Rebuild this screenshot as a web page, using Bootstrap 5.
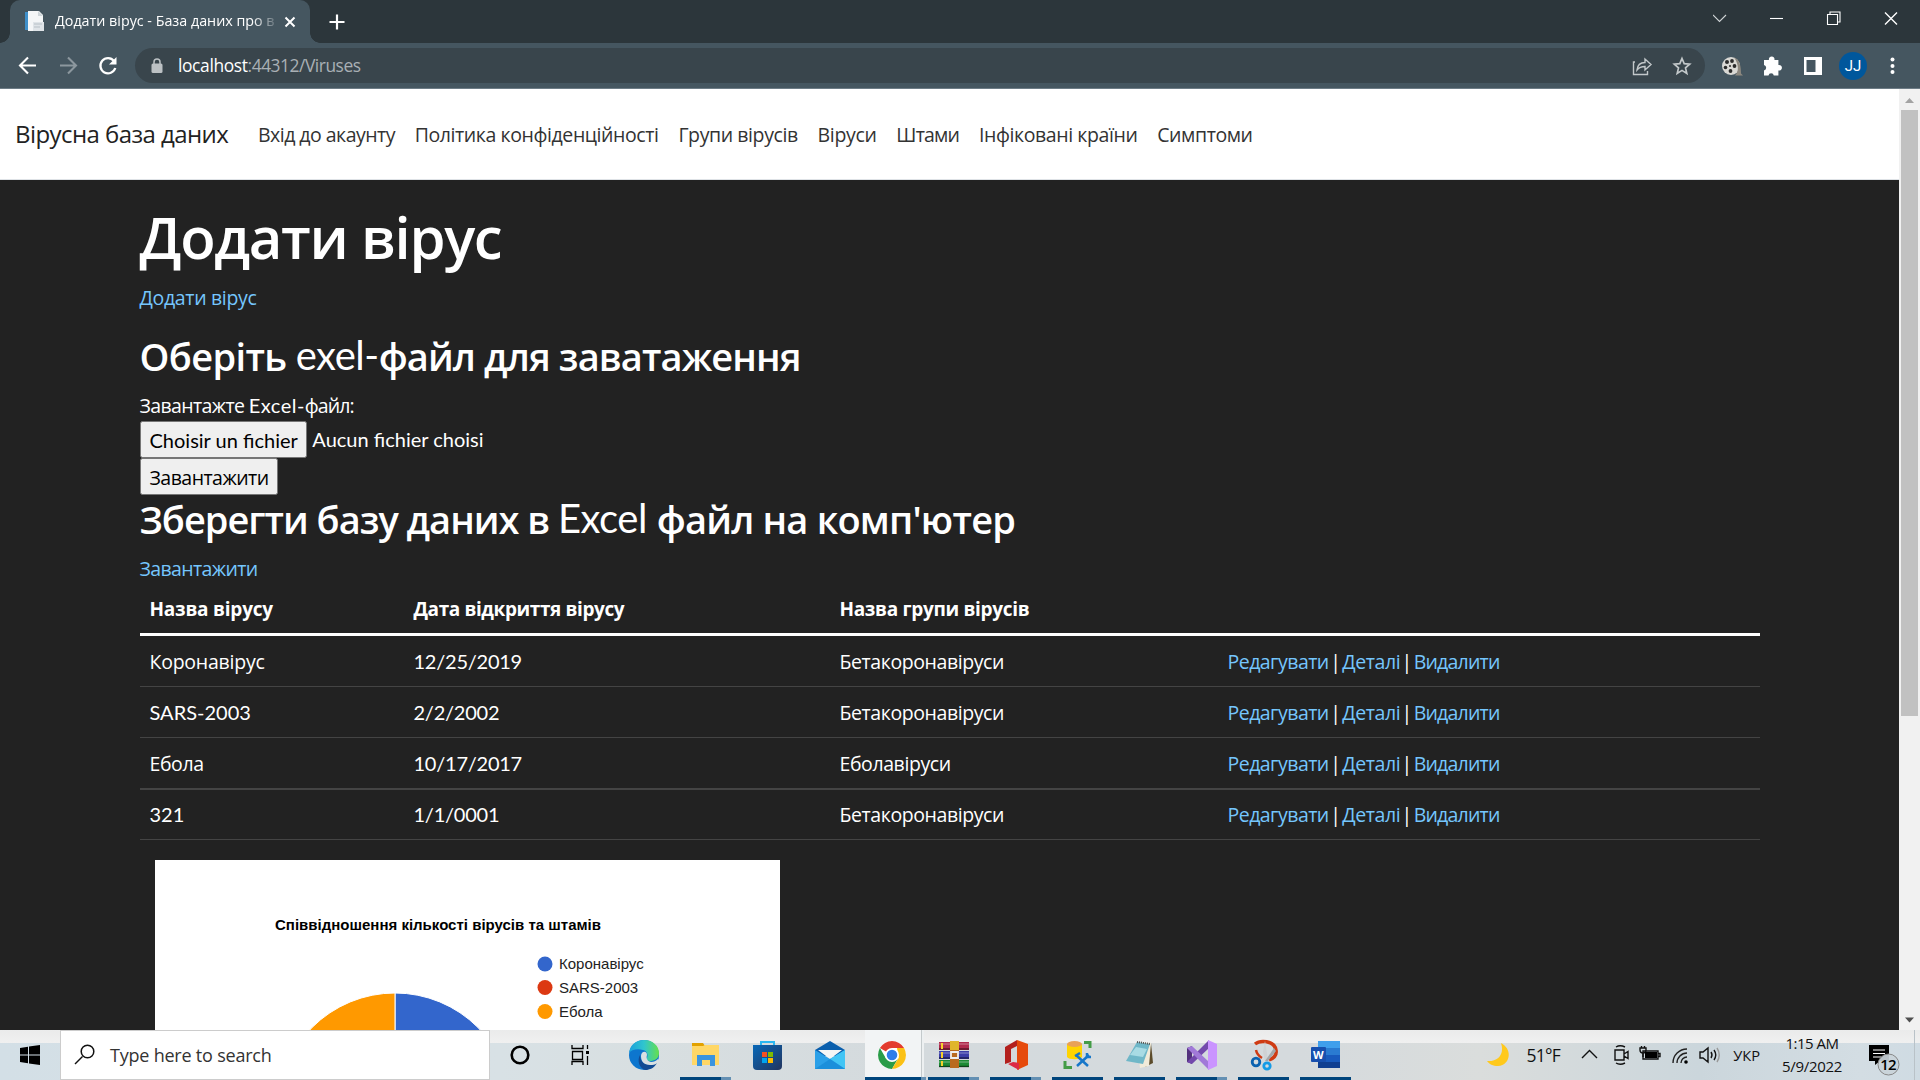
<!DOCTYPE html>
<html lang="uk">
<head>
<meta charset="utf-8">
<title>Додати вірус - База даних про віруси</title>
<link href="https://cdn.jsdelivr.net/npm/bootstrap@5.3.0/dist/css/bootstrap.min.css" rel="stylesheet">
<style>
html,body{width:1920px;height:1080px;overflow:hidden}
body{font-family:"Open Sans","Noto Sans",sans-serif;font-size:19.5px;line-height:30px;color:#fff;background:#222}
svg{display:block;flex:none}
.lat{font-family:Lato,sans-serif;font-size:20px;font-weight:400}
.t{white-space:pre;display:inline-block;vertical-align:top}
.t.lat{margin-top:-1px;margin-bottom:1px}
/* tracking steps, in thousandths of an em */
.k12{letter-spacing:-.012em}
.k17{letter-spacing:-.017em}
.k21{letter-spacing:-.021em}
.k24{letter-spacing:-.0235em}
.k27{letter-spacing:-.027em}
.k32{letter-spacing:-.032em}
.k40{letter-spacing:-.040em}
.k46{letter-spacing:-.046em}
.wide{letter-spacing:.024em}
/* browser chrome */
.tabstrip{height:43px;background:#2c363b;padding-left:10px}
.tab-active{width:300px;height:43px;background:#455660;border-radius:10px 10px 0 0;padding:0 14px;position:relative}
.tab-active::before,.tab-active::after{content:"";position:absolute;bottom:0;width:10px;height:10px}
.tab-active::before{left:-10px;background:radial-gradient(circle at 0 0,#2c363b 9.5px,#455660 10px)}
.tab-active::after{right:-10px;background:radial-gradient(circle at 100% 0,#2c363b 9.5px,#455660 10px)}
.tab-title{flex:none;font-size:14.3px;width:222px;margin:0 7px 2px 10px;white-space:nowrap;-webkit-mask-image:linear-gradient(90deg,#000 197px,rgba(0,0,0,.15) 221px)}
.tab-plus{margin-left:17px}
.toolbar{height:46px;background:#455660;border-bottom:1px solid #6d7c86;padding-left:17px}
.omni{width:1570px;height:35px;border-radius:18px;background:#39454c;padding:0 13px 0 16px;font-size:17.4px;color:#a9b0b5}
.omni-url{margin:0 0 1px 15px}
.avatar{width:28px;height:28px;border-radius:50%;background:#00579c;font:400 15px/28px Roboto,sans-serif;text-align:center}
/* page */
.viewport-area{height:941px}
.page-body{width:1899px;height:941px;overflow:hidden;background:#222}
.site-nav{height:91px;background:#fff;border-bottom:1px solid #dee2e6;padding:2px 15px 0}
.site-nav .navbar-brand{font-size:24px;color:#222;padding:0;margin:0 29px 2px 0;line-height:38px;width:214px;white-space:nowrap}
.site-nav .nav-link{padding:0;font-size:19.5px;color:#333;white-space:nowrap}
.nav-items{gap:19.8px}
.content{width:1620px;margin:0 auto}
h1{font-size:58px;font-weight:600;line-height:72px;margin:21px 0 10px}
h2{font-size:38px;font-weight:600;line-height:48px;margin:0 0 11px;white-space:nowrap}
h2 .lat{font-size:40px}
.h-upload{margin-top:19px}
.content a{color:#75c6fd;text-decoration:none}
.ln{height:30px;white-space:nowrap}
.file-row{height:37px}
.file-note{margin-left:5px}
.raw-btn{background:#efefef;border:1px solid #767676;border-radius:2.5px;color:#000;padding:0 8.5px;height:37px;line-height:36px;margin-left:.5px}
.raw-btn .t{position:relative;top:.5px}
.vt{table-layout:fixed;width:1620px;margin:0;--bs-table-bg:transparent;--bs-table-color:#fff;color:#fff;border-color:#444}
.vt th,.vt td{padding:11px 10px 9px;border-bottom:1px solid #444;white-space:nowrap}
.vt td{height:51px}
.vt th{border-bottom:3px solid #fff;font-weight:700;font-size:19px;padding:10px 10px 9px}
.vt tr.thick td{border-bottom-width:2px;padding-bottom:8px}
.vt tr.thick+tr td{padding-top:10px}
.sep{display:inline-block;width:13.5px;text-align:center;vertical-align:top}
.c1{width:264px}.c2{width:426px}.c3{width:388px}
.chart{width:625px;height:500px;margin:20px 0 0 15.5px;background:#fff}
.chart text{font-family:"Liberation Sans",Arial,sans-serif;font-size:15px;fill:#222}
.chart .chart-title{fill:#000}
.scroll{width:21px;background:#f1f1f1}
.thumb{width:17px;height:606px;background:#c1c1c1}
/* taskbar */
.taskbar{height:50px;color:#111;background:linear-gradient(180deg,#eaebeb 0,#f0f0f0 13px,transparent 13px),linear-gradient(90deg,#d3dfe6 0,#d8e1e5 500px,#d8dfe1 640px,#d4dadd 900px,#d5dadd 1300px,#dadddc 1480px,#cbd6dc 1700px,#d3dde3 1860px,#cfdbe3 1920px)}
.start{width:60px;padding-left:20px}
.search{width:430px;height:50px;background:#fff;border:1px solid #ccc;font-size:18px;color:#333;padding-left:13px}
.search .t{margin-left:15px}
.slot{width:62px;height:50px;padding-left:5px}
.slot>svg{margin:0 auto 0 10px}
.slot .bar{height:3px;width:51px;background:#00457c;margin-left:-1px}
.slot .bar.multi{width:51px;background:linear-gradient(90deg,#00457c 41px,#6490b3 41px)}
.slot.active{background:linear-gradient(90deg,transparent 3px,#f2f4f5 3px,#f2f4f5 59px,#c4cacc 59px,#c4cacc 60px,#edf0f1 60px)}
.slot.active .bar.multi{width:61px;margin-left:-2px;background:linear-gradient(90deg,#00457c 56px,#6490b3 56px)}
.temp{margin-left:15px;font-size:17.5px}
.tray{margin-left:21px}
.lang{margin-left:12px;font-size:14.7px}
.clock{font-size:15px;line-height:23px;text-align:center;width:60px;margin-left:22px}
.notif{margin-left:26px}
</style>
</head>
<body>
<header>
  <div class="tabstrip d-flex align-items-center">
    <div class="tab-active d-flex align-items-center">
      <svg width="21" height="21" viewBox="0 0 21 21"><path d="M1 1h4v18H1z" fill="#3f8fc9"/><path d="M4 0h11l4 4v16H4z" fill="#f4f6f7"/><path d="M14 0v5h5" fill="#cfd6da"/><path d="M9 11h11v9H9z" fill="#dfe4e8"/><path d="M10 13h8M10 16h6" stroke="#b7c0c6"/></svg>
      <div class="tab-title">Додати вірус - База даних про в</div>
      <svg width="12" height="12" viewBox="0 0 12 12"><path d="M1.500 1.500l9 9M10.500 1.500l-9 9" stroke="#fff" stroke-width="2"/></svg>
    </div>
    <svg class="tab-plus" width="20" height="16" viewBox="0 0 20 16"><path d="M10 .5v15M2.500 8h15" stroke="#fff" stroke-width="2.200"/></svg>
    <svg class="ms-auto" width="207" height="24" viewBox="0 0 207 24"><g fill="none" stroke="#fff" stroke-width="1.100"><path d="M0 5l6.500 6.500L13 5" stroke="#d0d4d6"/><path d="M57 8.500h13"/><path d="M114.500 4.500h10v10h-10zM117 4v-2h10v10h-2"/><path d="M172 2.500l12 12M184 2.500l-12 12" stroke-width="1.400"/></g></svg>
  </div>
  <div class="toolbar d-flex align-items-center">
    <svg width="118" height="24" viewBox="0 0 118 24"><g fill="none" stroke-width="2.100"><path d="M19 11.500H3.500M11 3.500l-8 8 8 8" stroke="#fff"/><path d="M43 11.500h15.500M51 3.500l8 8-8 8" stroke="#8c979e"/><path d="M97 7A7.600 7.600 0 1 0 98.300 14" stroke="#fff" stroke-width="2.300"/></g><path d="M99.500 3v7.500H92z" fill="#fff"/></svg>
    <div class="omni d-flex align-items-center">
      <svg width="12" height="16" viewBox="0 0 12 16"><rect x=".5" y="5.500" width="11" height="9.500" rx="1.500" fill="#bcc1c4"/><path d="M3 6V4a3 3 0 0 1 6 0v2" fill="none" stroke="#bcc1c4" stroke-width="1.500"/></svg>
      <div class="omni-url text-nowrap"><span class="t k21 text-white">localhost</span><span class="t k27">:44312/Viruses</span></div>
      <svg class="ms-auto" width="60" height="22" viewBox="0 0 60 22"><g fill="none" stroke="#c3c8ca" stroke-width="1.400"><path d="M3 7H1.500v12.500h14V16"/><path d="M5 15c.5-5 3-7.500 8-7.500V4l6 5.500-6 5.500v-3.500c-4 0-6 1-8 3.500z"/><path d="M50 3.500l2.200 5.200 5.500.5-4.200 3.700 1.300 5.500-4.800-3-4.800 3 1.300-5.500-4.200-3.700 5.500-.5z" stroke-width="1.700"/></g></svg>
    </div>
    <svg class="ms-3" width="110" height="24" viewBox="0 0 110 24"><circle cx="10" cy="12" r="9" fill="#d9d8d4"/><path d="M13 3.500c6 2 7 9 7 16l2 2h-8c4-4 4-11-1-18z" fill="#8d887f"/><g fill="#2b2b2b"><circle cx="6" cy="8" r="2"/><circle cx="11" cy="7" r="1.900"/><circle cx="13.500" cy="12" r="1.900"/><circle cx="4.500" cy="13.500" r="1.800"/><circle cx="9.500" cy="17" r="1.900"/><circle cx="9" cy="12" r="1"/></g><path d="M44 6h4a2.800 2.800 0 1 1 5.400 0h4v5a2.800 2.800 0 1 1 0 5.400v5h-4.600a2.700 2.700 0 0 0-5.300 0H43v-5a2.700 2.700 0 0 0 0-5.300V6z" fill="#fff"/><path d="M83 3h18v18H83z" fill="#fff"/><path d="M85.500 6h9v12h-9z" fill="#455660"/></svg>
    <div class="avatar ms-2">JJ</div>
    <svg class="ms-auto me-4" width="6" height="18" viewBox="0 0 6 18"><g fill="#fff"><circle cx="2.500" cy="2.500" r="2"/><circle cx="2.500" cy="9" r="2"/><circle cx="2.500" cy="15" r="2"/></g></svg>
  </div>
</header>
<div class="viewport-area d-flex">
  <div class="page-body">
    <nav class="site-nav navbar d-flex flex-nowrap justify-content-start">
      <a class="navbar-brand k24" href="#">Вірусна база даних</a>
      <div class="nav-items d-flex">
        <a class="nav-link k27" href="#">Вхід до акаунту</a>
        <a class="nav-link k21" href="#">Політика конфіденційності</a>
        <a class="nav-link k21" href="#">Групи вірусів</a>
        <a class="nav-link k17" href="#">Віруси</a>
        <a class="nav-link k40" href="#">Штами</a>
        <a class="nav-link k21" href="#">Інфіковані країни</a>
        <a class="nav-link k21" href="#">Симптоми</a>
      </div>
    </nav>
    <main class="content">
      <h1 class="k24">Додати вірус</h1>
      <div class="ln"><a class="k17" href="#">Додати вірус</a></div>
      <h2 class="h-upload"><span class="t k17">Оберіть </span><span class="t lat k12">exel-</span><span class="t k24">файл для заватаження</span></h2>
      <div class="ln"><span class="t k32">Завантажте </span><span class="t lat wide">Excel-</span><span class="t k46">файл:</span></div>
      <div class="file-row d-flex align-items-center"><button class="raw-btn"><span class="t lat">Choisir un fichier</span></button><span class="file-note t lat">Aucun fichier choisi</span></div>
      <button class="raw-btn d-block"><span class="t k27">Завантажити</span></button>
      <h2><span class="t k27">Зберегти базу даних в </span><span class="t lat k12">Excel </span><span class="t k21">файл на комп'ютер</span></h2>
      <div class="ln"><a class="k32" href="#">Завантажити</a></div>
      <table class="table vt">
        <colgroup><col class="c1"><col class="c2"><col class="c3"><col></colgroup>
        <thead><tr><th><span class="t k12">Назва вірусу</span></th><th><span class="t k21">Дата відкриття вірусу</span></th><th><span class="t k17">Назва групи вірусів</span></th><th></th></tr></thead>
        <tbody>
          <tr><td><span class="t k12">Коронавірус</span></td><td><span class="t lat k12">12/25/2019</span></td><td><span class="t k21">Бетакоронавіруси</span></td><td><a class="t k27" href="#">Редагувати</a><span class="sep">|</span><a class="t k21" href="#">Деталі</a><span class="sep">|</span><a class="t k40" href="#">Видалити</a></td></tr>
          <tr><td><span class="t lat">SARS-2003</span></td><td><span class="t lat k12">2/2/2002</span></td><td><span class="t k21">Бетакоронавіруси</span></td><td><a class="t k27" href="#">Редагувати</a><span class="sep">|</span><a class="t k21" href="#">Деталі</a><span class="sep">|</span><a class="t k40" href="#">Видалити</a></td></tr>
          <tr class="thick"><td><span class="t k21">Ебола</span></td><td><span class="t lat k12">10/17/2017</span></td><td><span class="t k21">Еболавіруси</span></td><td><a class="t k27" href="#">Редагувати</a><span class="sep">|</span><a class="t k21" href="#">Деталі</a><span class="sep">|</span><a class="t k40" href="#">Видалити</a></td></tr>
          <tr><td><span class="t lat">321</span></td><td><span class="t lat k12">1/1/0001</span></td><td><span class="t k21">Бетакоронавіруси</span></td><td><a class="t k27" href="#">Редагувати</a><span class="sep">|</span><a class="t k21" href="#">Деталі</a><span class="sep">|</span><a class="t k40" href="#">Видалити</a></td></tr>
        </tbody>
      </table>
      <div class="chart"><svg width="625" height="400"><text class="chart-title" x="120" y="70" font-weight="700" textLength="326">Співвідношення кількості вірусів та штамів</text><path d="M240 250V133a117 117 0 0 1 0 234z" fill="#36c" stroke="#fff"/><path d="M240 250v117a117 117 0 0 1 0-234z" fill="#f90" stroke="#fff"/><circle cx="390" cy="104" r="7.500" fill="#36c"/><circle cx="390" cy="127.500" r="7.500" fill="#dc3912"/><circle cx="390" cy="151.500" r="7.500" fill="#f90"/><text x="404" y="109">Коронавірус</text><text x="404" y="133">SARS-2003</text><text x="404" y="157">Ебола</text></svg></div>
    </main>
  </div>
  <div class="scroll d-flex flex-column align-items-center">
    <svg width="21" height="21"><path d="M6 14l4.500-5 4.500 5z" fill="#a3a3a3"/></svg><div class="thumb"></div><svg class="mt-auto" width="21" height="21"><path d="M6 8.500l4.500 5 4.500-5z" fill="#505050"/></svg>
  </div>
</div>
<footer class="taskbar d-flex align-items-center">
  <div class="start"><svg width="20" height="20" viewBox="0 0 20 20"><path d="M0 3l8-1.200V9.500H0zM9 1.600L20 0v9.500H9zM0 10.500h8v7.700L0 17zM9 10.500h11V20L9 18.400z"/></svg></div>
  <div class="search d-flex align-items-center"><svg width="21" height="22" viewBox="0 0 21 22"><path d="M8.500 12.500L1 20" stroke="#111" stroke-width="1.500"/><circle cx="13.500" cy="7.500" r="6.300" fill="none" stroke="#111" stroke-width="1.500"/></svg><span class="t k12">Type here to search</span></div>
  <div class="slot d-flex flex-column"><svg width="30" height="47" viewBox="0 8 30 47"><circle cx="15" cy="33" r="8.300" fill="none" stroke="#000" stroke-width="2.600"/></svg></div>
  <div class="slot d-flex flex-column"><svg width="30" height="47" viewBox="0 8 30 47"><path d="M5 23v3.500h11V23M5.500 29.500h10v8h-10zM5 43v-3.500h11V43M20.500 23v4M20.500 34v9" fill="none" stroke="#000" stroke-width="1.300"/><path d="M19 29h3v3h-3z"/></svg></div>
  <div class="slot d-flex flex-column"><svg width="30" height="47" viewBox="0 -10 30 47"><defs><linearGradient id="eg" x1="0" x2="1"><stop offset="0" stop-color="#1aa0dc"/><stop offset=".5" stop-color="#30c5ce"/><stop offset="1" stop-color="#66e04b"/></linearGradient></defs><circle cx="15" cy="15" r="15" fill="#0d76ce"/><path d="M0 13C1 5 7 0 15 0c9 0 15 6 15 13 0 6-5 8-9 8-3 0-4-1-3-3s1-7-4-8C8 8 2 10 0 13z" fill="url(#eg)"/><path d="M12 16c0-5 6-6 6-1-1 3 0 6 4 7 3 0 5-1 7-3l1 2-2 3c-8 4-16 1-16-8z" fill="#d9e0e2"/><path d="M11 15c0 6 4 10 10 10 3 0 5 0 7-2-3 5-7 7-12 7-6-2-8-10-5-15z" fill="#124b93"/></svg></div>
  <div class="slot d-flex flex-column"><svg width="30" height="47" viewBox="0 -10 30 47"><path d="M1 3h11l2 3H1z" fill="#e2a100"/><path d="M1 6h11l2-1h14v20H1z" fill="#ffd766"/><path d="M6 26V15h18v11h-5v-6h-8v6z" fill="#3a94df"/></svg><div class="bar multi"></div></div>
  <div class="slot d-flex flex-column"><svg width="30" height="47" viewBox="0 -10 30 47"><defs><linearGradient id="st" y2="1"><stop stop-color="#0768b8"/><stop offset="1" stop-color="#23345e"/></linearGradient></defs><path d="M8 7V2h13v5" fill="none" stroke="#2bb8f2" stroke-width="2"/><path d="M0 5h29v21q0 4-4 4H4q-4 0-4-4z" fill="url(#st)"/><path d="M9 12h5v5H9z" fill="#f25022"/><path d="M15 12h5v5h-5z" fill="#7fba00"/><path d="M9 18h5v5H9z" fill="#00a4ef"/><path d="M15 18h5v5h-5z" fill="#ffb900"/></svg></div>
  <div class="slot d-flex flex-column"><svg width="30" height="47" viewBox="0 -10 30 47"><path d="M0 10L15 1l15 9v6H0z" fill="#0a5fad"/><path d="M3 10h24l-12 9z" fill="#f6f6f6"/><path d="M0 10l15 9 15-9v19H0z" fill="#2ba0e8"/><path d="M15 19l15-9v19z" fill="#42c5f5"/><path d="M0 29l15-10 15 10z" fill="#1b8fdb"/></svg></div>
  <div class="slot active d-flex flex-column"><svg width="30" height="47" viewBox="0 -10 30 47"><circle cx="15" cy="15" r="14" fill="#fff"/><path d="M15 15L2.900 8A14 14 0 0 1 27.100 8H15z" fill="#e33b2e"/><path d="M2.900 8A14 14 0 0 0 15 29l6-10.500-6-3.500-6 3.500z" fill="#2a9c48"/><path d="M27.100 8A14 14 0 0 1 15 29l6.500-11L20 8z" fill="#fbc116"/><circle cx="15" cy="15" r="7" fill="#fff"/><circle cx="15" cy="15" r="5.300" fill="#2f7de9"/></svg><div class="bar multi"></div></div>
  <div class="slot d-flex flex-column"><svg width="30" height="47" viewBox="0 -10 30 47"><path d="M0 2h30v8H0z" fill="#b02a4d"/><path d="M0 11h30v8H0z" fill="#3b3fa8"/><path d="M0 20h30v7H0z" fill="#1c8a35"/><path d="M0 4h30M0 13h30M0 22h30" stroke="#fff" stroke-opacity=".2" stroke-width="2"/><path d="M0 9h30M0 18h30M0 26.500h30" stroke="#000" stroke-opacity=".5" stroke-width="1.500"/><path d="M3 3v6M3 12v6M3 21v5" stroke="#f6d12b" stroke-width="2"/><path d="M11 1h9v27h-9z" fill="#b96a20"/><path d="M11 1h9v9h-9z" fill="#e0b62c"/><path d="M12 12h7v6h-7z" fill="none" stroke="#eee" stroke-width="1.800"/></svg><div class="bar multi"></div></div>
  <div class="slot d-flex flex-column"><svg width="30" height="47" viewBox="0 -10 30 47"><path d="M4 7l12-7v6l-6 3v13l-6 2z" fill="#b3201d"/><path d="M16 0l11 4v21l-11 5V6z" fill="#e64a0c"/><path d="M7 24l5-2 6 1v7z" fill="#dd2a44"/></svg><div class="bar multi"></div></div>
  <div class="slot d-flex flex-column"><svg width="30" height="47" viewBox="0 -10 30 47"><path d="M4 4v13c2 3 13 3 15 0V4z" fill="#ffd400"/><ellipse cx="11.500" cy="4" rx="7.500" ry="3" fill="#e9a157"/><path d="M21 2.500h6V8M2 21v6.500h7" fill="none" stroke="#449c47" stroke-width="3"/><path d="M13 15l12 11M26 15L14 26" stroke="#1877c9" stroke-width="2.500"/><path d="M12 16l5-3M24 13v4h4" stroke="#1877c9" stroke-width="2.500" fill="none"/></svg><div class="bar"></div></div>
  <div class="slot d-flex flex-column"><svg width="30" height="47" viewBox="0 -10 30 47"><path d="M26 3l2 20-8 4z" fill="#5b4b2b"/><path d="M12 2l14 1-2 23-9 2z" fill="#f1ebd9"/><path d="M12 2l13 2-7 20L1 21z" fill="#6fb7c8"/><path d="M11 7l11 2-4 8L5 15z" fill="#a8dbe4"/><path d="M12 2l13 2" stroke="#555" stroke-width="2" stroke-dasharray="1 1"/></svg><div class="bar"></div></div>
  <div class="slot d-flex flex-column"><svg width="30" height="47" viewBox="0 -10 30 47"><path d="M0 8l5-2v18l-5-2z" fill="#52307c"/><path d="M0 22l5 2L22 8V0z" fill="#7349ac"/><path d="M0 8l5-2 17 16v8z" fill="#a179d8"/><path d="M21 0l9 4v22l-9 4z" fill="#ca94ff"/></svg><div class="bar multi"></div></div>
  <div class="slot d-flex flex-column"><svg width="30" height="47" viewBox="0 -10 30 47"><path d="M6 4C11 0 25 0 27 10c1 5-2 8-7 10" fill="none" stroke="#cf3b13" stroke-width="3.500"/><path d="M7 10q1 5 6 8" fill="none" stroke="#cf3b13" stroke-width="2.500"/><path d="M16 1l3 19-3 1-2-9z" fill="#cfd2d4"/><path d="M25 8l-9 13h3l8-10z" fill="#a4a8ab"/><circle cx="7" cy="22" r="3.800" fill="none" stroke="#0b62b0" stroke-width="2.800"/><circle cx="18" cy="26" r="3.200" fill="none" stroke="#159be6" stroke-width="2.800"/></svg><div class="bar"></div></div>
  <div class="slot d-flex flex-column"><svg width="30" height="47" viewBox="0 -10 30 47"><path d="M7 1h22v7H7z" fill="#3f9fec"/><path d="M7 8h22v7H7z" fill="#2a7bd1"/><path d="M7 15h22v7H7z" fill="#185abd"/><path d="M7 22h22v6H7z" fill="#103f91"/><rect y="7" width="15" height="15" rx="1" fill="#174fae"/><text x="2" y="18.500" font-size="11" font-weight="700" fill="#fff" font-family="Open Sans">W</text></svg><div class="bar"></div></div>
  <div class="d-flex align-items-center ms-auto">
    <svg width="24" height="24" viewBox="0 0 24 24"><path d="M14 0c13 7 8 23-3 23-5 0-9-2-11-5 10 1 18-6 14-18z" fill="#ffc91c"/></svg>
    <span class="t temp k40">51°F</span>
    <svg class="tray" width="140" height="22" viewBox="0 0 140 22"><g fill="none" stroke="#111" stroke-width="1.400"><path d="M1 14l7.500-7.500L16 14"/><path d="M34 6h9v10h-9zM43 10l4-2.500v7L43 12M35 3q4-2.500 9 0M35 19q4 2.500 9 0"/><path d="M62 7h15v8H62zM77 9.500h2v3h-2"/><path d="M59 4h6v2q0 3-3 3t-3-3zM60.500 4V2M63.500 4V2M62 9v4"/><path d="M92 19a14 14 0 0 1 14-14M96 19a10 10 0 0 1 10-10M100 19a6 6 0 0 1 6-6" stroke="#222"/><path d="M119 8h3l5-4v14l-5-4h-3zM130 8q2 3 0 6M133 6q3.500 5 0 10"/><path d="M136 4q4.500 7 0 14" stroke="#999"/></g><path d="M64 8h12v6H64z"/><circle cx="105" cy="18" r="1.800"/></svg>
    <span class="t lang">УКР</span>
    <div class="clock"><span class="t k32">1:15 AM</span><br><span class="t k21">5/9/2022</span></div>
    <svg class="notif" width="52" height="50" viewBox="0 0 52 50"><path d="M1 15h20v16h-9l-5 4v-4H1z"/><path d="M5 20h12M5 23.500h12M5 27h8" stroke="#fff" stroke-width="1.200"/><circle cx="20.500" cy="34.500" r="10.500" fill="#c9d3d9" fill-opacity=".92" stroke="#888"/><text x="20" y="40" text-anchor="middle" font-size="15" font-weight="600" font-family="Open Sans" letter-spacing="-.9">12</text><path d="M46.500 0v50" stroke="#b9c2c8"/></svg>
  </div>
</footer>
<script src="https://cdn.jsdelivr.net/npm/bootstrap@5.3.0/dist/js/bootstrap.bundle.min.js"></script>
</body>
</html>
